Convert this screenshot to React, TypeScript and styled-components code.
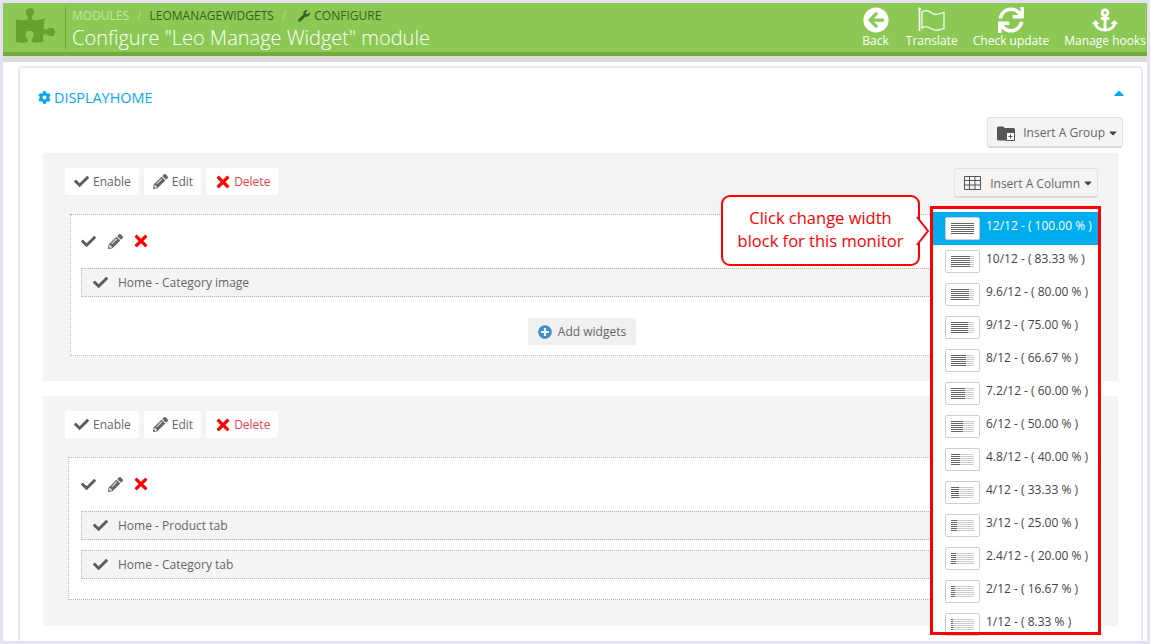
import React from "react";
import styled, { createGlobalStyle } from "styled-components";
import {
  FaAnchor,
  FaArrowCircleLeft,
  FaCaretDown,
  FaCaretUp,
  FaCheck,
  FaCog,
  FaPencilAlt,
  FaPlusCircle,
  FaPuzzlePiece,
  FaSync,
  FaTimes,
  FaWrench,
} from "react-icons/fa";

const WIDTHS = [
  { label: "12/12 - ( 100.00 % )", ratio: 1 },
  { label: "10/12 - ( 83.33 % )", ratio: 0.8333 },
  { label: "9.6/12 - ( 80.00 % )", ratio: 0.8 },
  { label: "9/12 - ( 75.00 % )", ratio: 0.75 },
  { label: "8/12 - ( 66.67 % )", ratio: 0.6667 },
  { label: "7.2/12 - ( 60.00 % )", ratio: 0.6 },
  { label: "6/12 - ( 50.00 % )", ratio: 0.5 },
  { label: "4.8/12 - ( 40.00 % )", ratio: 0.4 },
  { label: "4/12 - ( 33.33 % )", ratio: 0.3333 },
  { label: "3/12 - ( 25.00 % )", ratio: 0.25 },
  { label: "2.4/12 - ( 20.00 % )", ratio: 0.2 },
  { label: "2/12 - ( 16.67 % )", ratio: 0.1667 },
  { label: "1/12 - ( 8.33 % )", ratio: 0.0833 },
];

const GlobalStyle = createGlobalStyle`
  html, body {
    margin: 0;
    padding: 0;
    background: #e6e1f0;
  }
  * {
    box-sizing: border-box;
  }
`;

const Frame = styled.div`
  width: 1150px;
  height: 644px;
  padding: 3px;
  overflow: hidden;
  font-family: "Open Sans", "Liberation Sans", sans-serif;
  font-size: 12px;
  color: #666;
`;

const Page = styled.div`
  height: 638px;
  background: #fff;
  overflow: hidden;
`;

const Header = styled.header`
  display: flex;
  align-items: stretch;
  height: 53px;
  background: #8bc954;
  border-bottom: 4px solid #72ad37;
`;

const ModuleIcon = styled.div`
  width: 62px;
  height: 46px;
  padding: 3px 0 0 13px;
  font-size: 39px;
  line-height: 1;
  color: #66a22e;
`;

const Titles = styled.div`
  flex: 1;
  margin-top: 4px;
  height: 42px;
  padding-left: 6px;
  border-left: 1px solid #6ca636;
`;

const Breadcrumb = styled.div`
  display: flex;
  align-items: center;
  height: 17px;
  font-size: 12px;
  color: #3f6b1a;
`;

const Crumb = styled.span<{ $light?: boolean }>`
  display: inline-flex;
  align-items: center;
  gap: 4px;
  color: ${(p) => (p.$light ? "#c4e4a7" : "#3b5f1c")};
`;

const Slash = styled.span`
  margin: 0 8px;
  color: #b5dc92;
`;

const WrenchCrumb = styled(Crumb)`
  margin-left: 4px;
`;

const PageTitle = styled.h1`
  margin: 1px 0 0;
  font-size: 20px;
  font-weight: 300;
  line-height: 25px;
  color: #fff;
`;

const Toolbar = styled.nav`
  display: flex;
  gap: 15px;
  padding: 3px 1px 0 0;
`;

const ToolButton = styled.div`
  display: flex;
  flex-direction: column;
  align-items: center;
  font-size: 12px;
  line-height: 15px;
  color: #fff;

  &:first-child {
    margin-right: 2px;
  }
`;

const ToolIcon = styled.div`
  height: 27px;
  font-size: 26px;
  line-height: 1;
  display: flex;
  align-items: center;
`;

const GreyStrip = styled.div`
  height: 6px;
  background: #dcdcdc;
`;

const Content = styled.main`
  padding: 4px 4px 0 15px;
`;

const Panel = styled.section`
  position: relative;
  height: 600px;
  padding: 0 23px;
  border: 2px solid #eaeaea;
  border-bottom: 0;
  border-radius: 5px 5px 0 0;
`;

const PanelHead = styled.div`
  display: flex;
  justify-content: space-between;
  align-items: center;
  height: 49px;
  padding: 9px 0 0 0;
`;

const PanelTitle = styled.h2`
  display: flex;
  align-items: center;
  gap: 3px;
  margin: 0 0 0 -5px;
  font-size: 14.4px;
  font-weight: 400;
  color: #0aa7ee;

  svg {
    font-size: 13px;
  }
`;

const Collapse = styled.span`
  margin: 0 -9px 6px 0;
  font-size: 16px;
  line-height: 1;
  color: #0aa7ee;
`;

const GroupActions = styled.div`
  display: flex;
  justify-content: flex-end;
  margin-right: -5px;
  height: 36px;
`;

const InsertButton = styled.button<{ $tall?: boolean }>`
  display: inline-flex;
  align-items: center;
  height: ${(p) => (p.$tall ? 31 : 30)}px;
  padding: 1px 3px 0 9px;
  font-family: inherit;
  font-size: 12px;
  color: #666;
  background: #f4f4f4;
  border: 1px solid #e2e2e2;
  border-bottom: 2px solid #d8d8d8;
  border-radius: 3px;
`;

const InsertIcon = styled.svg<{ $gap: number }>`
  margin-right: ${(p) => p.$gap}px;
`;

const Caret = styled(FaCaretDown)`
  margin-left: 2px;
  color: #444;
`;

const Group = styled.div<{ $height: number }>`
  height: ${(p) => p.$height}px;
  margin-bottom: 15px;
  padding: 15px 20px 0 22px;
  background: #f4f4f4;
`;

const GroupBar = styled.div`
  display: flex;
  justify-content: space-between;
  align-items: flex-start;
  height: 27px;
  margin-bottom: 19px;
`;

const ActionRow = styled.div`
  display: flex;
  gap: 5px;
`;

const ActionButton = styled.div<{ $danger?: boolean }>`
  display: flex;
  align-items: center;
  gap: ${(p) => (p.$danger ? 2 : 4)}px;
  height: 27px;
  padding: 0 8px 0 ${(p) => (p.$danger ? 8 : 9)}px;
  font-size: 12px;
  color: ${(p) => (p.$danger ? "#e8404c" : "#666")};
  background: #fff;
`;

const IconCheck = styled(FaCheck)`
  color: #5c5c5c;
  font-size: 15px;
`;

const IconPencil = styled(FaPencilAlt)`
  color: #666;
  font-size: 15px;
`;

const IconCross = styled(FaTimes)`
  color: #f00;
  font-size: 18px;
`;

const Column = styled.div<{ $height: number; $shift?: number }>`
  width: 1030px;
  height: ${(p) => p.$height}px;
  margin-left: ${(p) => p.$shift ?? 5}px;
  padding: 16px 10px 0 ${(p) => 10 - (p.$shift ?? 5) + 5}px;
  background: #fff;
  border: 1px dotted #b5b5b5;
`;

const ColumnActions = styled.div`
  display: flex;
  align-items: center;
  gap: 12px;
  height: 20px;
  margin-bottom: 17px;

  svg:last-child {
    margin-left: -3px;
  }
`;

const Widget = styled.div`
  display: flex;
  align-items: center;
  gap: 10px;
  height: 29px;
  margin-bottom: 10px;
  padding-left: 11px;
  font-size: 12px;
  color: #666;
  background: #f4f4f4;
  border: 1px dotted #b5b5b5;
`;

const AddRow = styled.div`
  display: flex;
  justify-content: center;
  padding: 11px 6px 0 0;
`;

const AddButton = styled.div`
  display: flex;
  align-items: center;
  gap: 6px;
  height: 27px;
  padding: 0 10px;
  font-size: 12px;
  color: #666;
  background: #f0f0f0;
`;

const AddIcon = styled(FaPlusCircle)`
  font-size: 14px;
  color: #3d8fc9;
`;

const Dropdown = styled.ul`
  position: absolute;
  top: 138px;
  left: 911px;
  width: 172px;
  height: 436px;
  margin: 0;
  padding: 6px 0 0;
  list-style: none;
  background: #fff;
  overflow: hidden;
`;

const RedOutline = styled.div`
  position: absolute;
  top: 138px;
  left: 910px;
  width: 171px;
  height: 429px;
  border: 3px solid #f00;
  pointer-events: none;
`;

const DropdownItem = styled.li<{ $active?: boolean }>`
  display: flex;
  gap: 6px;
  width: 168px;
  height: 33px;
  padding: 5px 0 0 14px;
  font-size: 12px;
  line-height: 18px;
  color: ${(p) => (p.$active ? "#fff" : "#444")};
  background: ${(p) => (p.$active ? "#00aeef" : "transparent")};
`;

const Thumb = styled.div`
  flex: none;
  width: 35px;
  height: 23px;
  background: #fff;
  border: 1px solid #cfcfcf;
  border-radius: 2px;
`;

const Callout = styled.div`
  position: absolute;
  top: 127px;
  left: 701px;
  width: 199px;
  height: 71px;
  padding-top: 9px;
  font-size: 16.5px;
  line-height: 23px;
  text-align: center;
  color: #f00;
  background: #fff;
  border: 2px solid #f00;
  border-radius: 9px;
`;

const CalloutTip = styled.svg`
  position: absolute;
  top: 19px;
  right: -12px;
`;

const WidthThumb = ({ ratio }: { ratio: number }) => {
  const total = 23;
  const dark = Math.round(total * ratio);
  return (
    <Thumb>
      <svg width="33" height="21" viewBox="0 0 33 21">
        {[0, 1, 2, 3, 4, 5].map((i) => {
          const y = 5.5 + i * 2;
          return (
            <g key={i}>
              <line x1="5" x2={5 + total} y1={y} y2={y} stroke="#ccc" strokeWidth="1" />
              <line x1="5" x2={5 + dark} y1={y} y2={y} stroke="#666" strokeWidth="1" />
            </g>
          );
        })}
      </svg>
    </Thumb>
  );
};

const FlagIcon = () => (
  <svg width="30" height="26" viewBox="0 0 30 26" fill="none" stroke="#fff">
    <circle cx="2.5" cy="2" r="1.4" fill="#fff" stroke="none" />
    <path d="M2.5 2v22" strokeWidth="1.6" />
    <path d="M5 5c3-2 6-2 9 .5s6 2.5 11 0.5c1.5-.6 2-.6 2-.6v16s-.5 0-2 .6c-5 2-8 1.500-11-.5s-6-2.500-9-.5z" strokeWidth="1.2" />
  </svg>
);

const GroupActionsBar = () => (
  <ActionRow>
    <ActionButton>
      <IconCheck />
      Enable
    </ActionButton>
    <ActionButton>
      <IconPencil />
      Edit
    </ActionButton>
    <ActionButton $danger>
      <IconCross />
      Delete
    </ActionButton>
  </ActionRow>
);

const ColumnTools = () => (
  <ColumnActions>
    <IconCheck />
    <IconPencil />
    <IconCross />
  </ColumnActions>
);

export default function App() {
  return (
    <Frame>
      <GlobalStyle />
      <Page>
        <Header>
          <ModuleIcon>
            <FaPuzzlePiece />
          </ModuleIcon>
          <Titles>
            <Breadcrumb>
              <Crumb $light>MODULES</Crumb>
              <Slash>/</Slash>
              <Crumb>LEOMANAGEWIDGETS</Crumb>
              <Slash>/</Slash>
              <WrenchCrumb>
                <FaWrench />
                CONFIGURE
              </WrenchCrumb>
            </Breadcrumb>
            <PageTitle>Configure "Leo Manage Widget" module</PageTitle>
          </Titles>
          <Toolbar>
            <ToolButton>
              <ToolIcon>
                <FaArrowCircleLeft />
              </ToolIcon>
              Back
            </ToolButton>
            <ToolButton>
              <ToolIcon>
                <FlagIcon />
              </ToolIcon>
              Translate
            </ToolButton>
            <ToolButton>
              <ToolIcon>
                <FaSync />
              </ToolIcon>
              Check update
            </ToolButton>
            <ToolButton>
              <ToolIcon>
                <FaAnchor />
              </ToolIcon>
              Manage hooks
            </ToolButton>
          </Toolbar>
        </Header>
        <GreyStrip />
        <Content>
          <Panel>
            <PanelHead>
              <PanelTitle>
                <FaCog />
                DISPLAYHOME
              </PanelTitle>
              <Collapse>
                <FaCaretUp />
              </Collapse>
            </PanelHead>
            <GroupActions>
              <InsertButton $tall>
                <InsertIcon $gap={8} width="18" height="16" viewBox="0 0 18 16">
                  <path
                    d="M0 3a1.500 1.500 0 0 1 1.500-1.500H6L8 3h8.500A1.500 1.500 0 0 1 18 4.500V14a1.500 1.500 0 0 1-1.500 1.500h-15A1.500 1.500 0 0 1 0 14z"
                    fill="#555"
                  />
                  <rect x="9.500" y="7.500" width="8" height="8" fill="#fff" stroke="#555" />
                  <path d="M13.500 9.500v4M11.500 11.500h4" stroke="#555" />
                </InsertIcon>
                Insert A Group
                <Caret />
              </InsertButton>
            </GroupActions>
            <Group $height={228}>
              <GroupBar>
                <GroupActionsBar />
                <InsertButton>
                  <InsertIcon $gap={9} width="17" height="14" viewBox="0 0 17 14">
                    <path
                      d="M.5.5h16v13H.5zM.5 4.500h16M.5 9h16M5.500.5v13M11 .5v13"
                      fill="none"
                      stroke="#555"
                    />
                  </InsertIcon>
                  Insert A Column
                  <Caret />
                </InsertButton>
              </GroupBar>
              <Column $height={142}>
                <ColumnTools />
                <Widget>
                  <IconCheck />
                  Home - Category image
                </Widget>
                <AddRow>
                  <AddButton>
                    <AddIcon />
                    Add widgets
                  </AddButton>
                </AddRow>
              </Column>
            </Group>
            <Group $height={230}>
              <GroupBar>
                <GroupActionsBar />
              </GroupBar>
              <Column $height={143} $shift={3}>
                <ColumnTools />
                <Widget>
                  <IconCheck />
                  Home - Product tab
                </Widget>
                <Widget>
                  <IconCheck />
                  Home - Category tab
                </Widget>
              </Column>
            </Group>
            <Callout>
              Click change width
              <br />
              block for this monitor
              <CalloutTip width="14" height="30" viewBox="0 0 14 30">
                <path d="M1 1l11 14L1 29" fill="#fff" stroke="#f00" strokeWidth="2" />
              </CalloutTip>
            </Callout>
            <Dropdown>
              {WIDTHS.map((item, index) => (
                <DropdownItem key={item.label} $active={index === 0}>
                  <WidthThumb ratio={item.ratio} />
                  {item.label}
                </DropdownItem>
              ))}
            </Dropdown>
            <RedOutline />
          </Panel>
        </Content>
      </Page>
    </Frame>
  );
}
